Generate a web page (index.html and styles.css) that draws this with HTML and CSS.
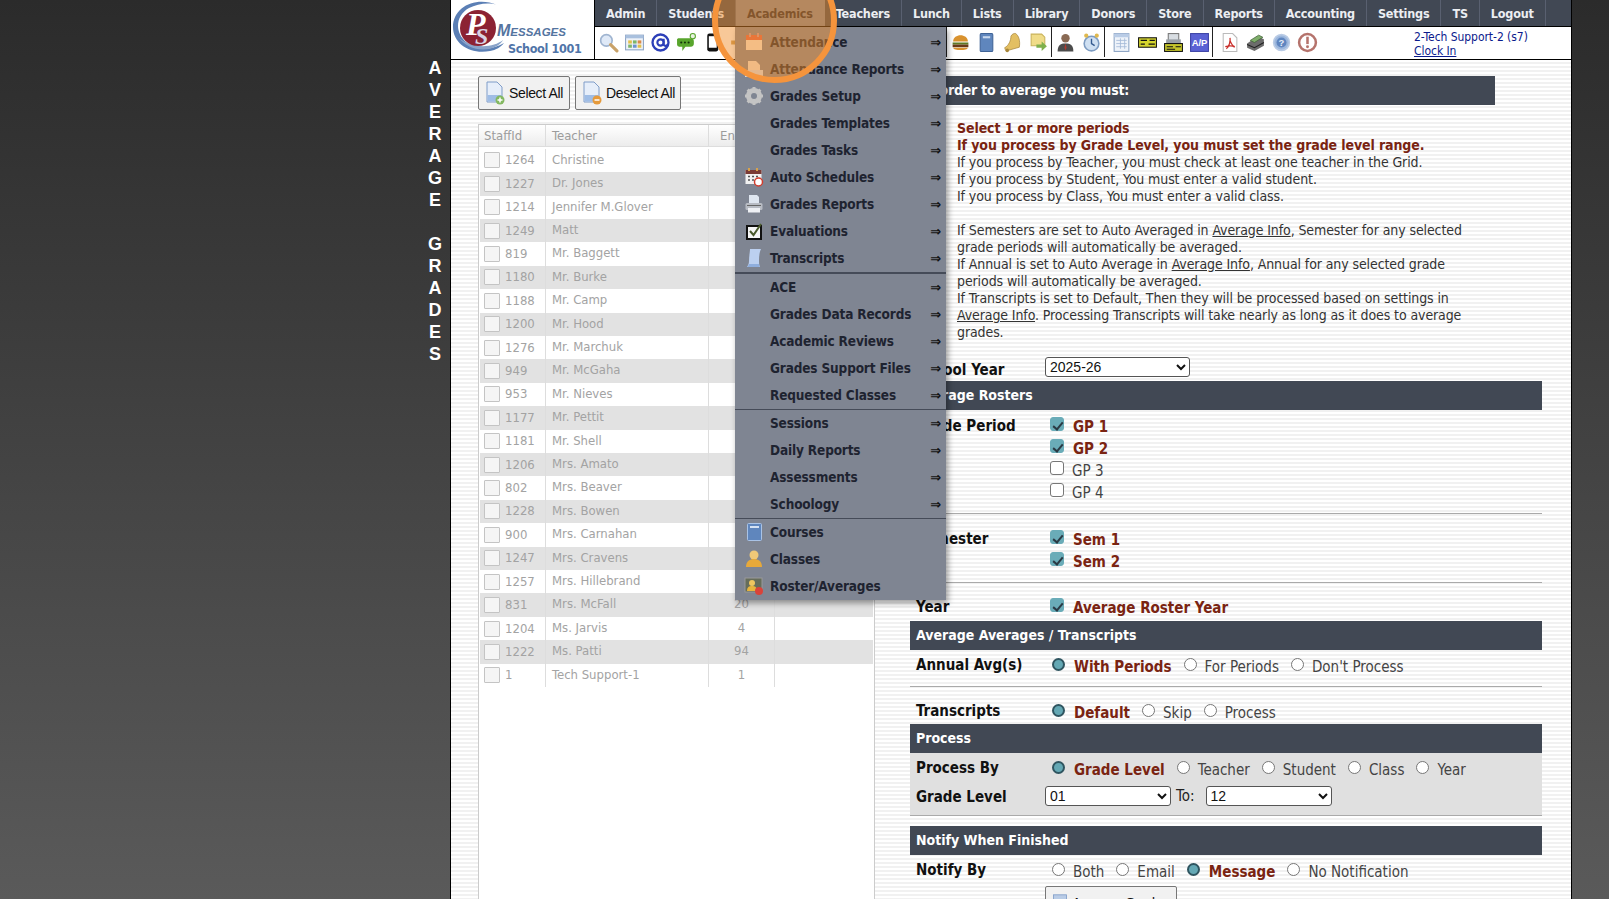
FILE: index.html
```html
<!DOCTYPE html>
<html lang="en">
<head>
<meta charset="utf-8">
<title>Average Grades</title>
<link rel="stylesheet" href="styles.css">
</head>
<body>
<aside class="side">
  <div class="vtext"><span>A</span><span>V</span><span>E</span><span>R</span><span>A</span><span>G</span><span>E</span><span>&nbsp;</span><span>G</span><span>R</span><span>A</span><span>D</span><span>E</span><span>S</span></div>
</aside>
<main class="page">
  <header class="top">
    <div class="logo">
      <svg width="143" height="59" viewBox="0 0 143 59">
        <path d="M46 5C26-4 2 6 2 27c0 17 18 28 37 24 6-1 11-4 14-8-11 7-28 8-38-1C3 32 5 15 18 8c8-4 20-6 28-3z" fill="#5b7fb5"/>
        <path d="M8 38c8 11 25 15 38 8 3-2 5-4 6-6-10 8-30 9-44-2z" fill="#8aa3c9"/>
        <circle cx="27" cy="28" r="18" fill="#8c2233"/>
        <text x="15" y="35" class="logo-p">P</text>
        <text x="24" y="44" class="logo-s">S</text>
        <text x="46" y="36" class="logo-m">M<tspan class="logo-ms" dy="0">ESSAGES</tspan></text>
        <text x="57" y="53" class="logo-sc">School 1001</text>
      </svg>
    </div>
    <div class="topright">
      <nav class="nav">
        <a>Admin</a><a>Students</a><a class="on">Academics</a><a>Teachers</a><a>Lunch</a><a>Lists</a><a>Library</a><a>Donors</a><a>Store</a><a>Reports</a><a>Accounting</a><a>Settings</a><a>TS</a><a>Logout</a>
      </nav>
      <div class="tools">
        <span class="t"><svg viewBox="0 0 20 20"><circle cx="8" cy="8" r="5.5" fill="#dfe9f7" stroke="#9fb4d0" stroke-width="1.6"/><path d="M12 12l6 6" stroke="#c9a268" stroke-width="3" stroke-linecap="round"/></svg></span>
        <span class="t"><svg viewBox="0 0 20 20"><rect x="1.5" y="3" width="17" height="14" fill="#eef2f8" stroke="#8ba3c4"/><rect x="1.5" y="3" width="17" height="3" fill="#a9c0de"/><rect x="4" y="8" width="3.5" height="3" fill="#e3c04a"/><rect x="8.5" y="8" width="3.5" height="3" fill="#7db56a"/><rect x="13" y="8" width="3.5" height="3" fill="#d98a4a"/><rect x="4" y="12" width="3.5" height="3" fill="#7db56a"/><rect x="8.5" y="12" width="3.5" height="3" fill="#6b93cf"/><rect x="13" y="12" width="3.5" height="3" fill="#e3c04a"/></svg></span>
        <span class="t"><svg viewBox="0 0 20 20"><circle cx="10" cy="10" r="7.6" fill="none" stroke="#2c3fb8" stroke-width="2.2"/><circle cx="10" cy="10" r="3" fill="none" stroke="#2c3fb8" stroke-width="2"/><path d="M13 6.5v5c0 2 3 2.500 4 0" fill="none" stroke="#2c3fb8" stroke-width="2"/></svg></span>
        <span class="t"><svg viewBox="0 0 20 20"><path d="M2 6h12a3 3 0 013 3v2a3 3 0 01-3 3H9l-3 4v-4H3a2 2 0 01-2-2V7z" fill="#58a52c"/><circle cx="5" cy="10" r="1" fill="#14320a"/><circle cx="8.500" cy="10" r="1" fill="#14320a"/><circle cx="12" cy="10" r="1" fill="#14320a"/><circle cx="16" cy="4" r="2.500" fill="#e8f2e0" stroke="#58a52c"/></svg></span>
        <span class="t"><svg viewBox="0 0 20 20"><rect x="5" y="1.500" width="10.500" height="17" rx="2" fill="#111"/><rect x="6.500" y="4" width="7.500" height="11" fill="#fff"/></svg></span>
        <span class="t"><svg viewBox="0 0 20 20"><path d="M3 8h4l6-4v12l-6-4H3z" fill="#c9a15c"/></svg></span>
        <span class="tgap"></span>
        <span class="t"><svg viewBox="0 0 20 20"><path d="M3 9c0-8 14-8 14 0z" fill="#d9922e"/><rect x="2.500" y="10" width="15" height="2" fill="#5f7a24"/><rect x="2.500" y="12" width="15" height="2.500" fill="#6b3a1a"/><path d="M3 15h14c0 3-14 3-14 0z" fill="#d9922e"/></svg></span>
        <span class="t"><svg viewBox="0 0 20 20"><rect x="4" y="1.500" width="12" height="17" rx="1" fill="#5f86bd" stroke="#3f6396"/><rect x="6.500" y="4" width="7" height="2" fill="#c9d9ee"/></svg></span>
        <span class="t"><svg viewBox="0 0 20 20"><path d="M13 1.500c3 2 4.500 7 3.500 13L4 18c-1-1-1-2-1.500-3 4-2 6-7 6-11 1-2 3-3 4.500-2.500z" fill="#e3bf62" stroke="#a8863a" stroke-width=".7"/><circle cx="5" cy="17.500" r="1.700" fill="#a8863a"/></svg></span>
        <span class="t sep"><svg viewBox="0 0 20 20"><path d="M3 2h10l3 3v8H3z" fill="#f0dc88" stroke="#c9b35c"/><path d="M8 12h5V9l5 4.500-5 4.500v-3H8z" fill="#7fb04c"/></svg></span>
        <span class="t"><svg viewBox="0 0 20 20"><circle cx="10" cy="6" r="4" fill="#8a6a54"/><path d="M2.500 18.500c0-6 3-7.500 7.500-7.500s7.500 1.500 7.500 7.500z" fill="#4c4c4c"/><path d="M10 11l-1 4 1 2.500 1-2.500z" fill="#b23a2c"/></svg></span>
        <span class="t sep sepm"><svg viewBox="0 0 20 20"><circle cx="10" cy="11" r="7" fill="#cfe0f2" stroke="#7d9cc2" stroke-width="1.500"/><path d="M10 6.500V11l3 2" stroke="#335a8f" stroke-width="1.300" fill="none"/><circle cx="5" cy="3.500" r="2" fill="#e0b94f"/><circle cx="15" cy="3.500" r="2" fill="#e0b94f"/></svg></span>
        <span class="t"><svg viewBox="0 0 20 20"><rect x="3" y="1.500" width="14" height="17" fill="#eef3fa" stroke="#8ba3c4"/><rect x="3" y="1.500" width="14" height="3.500" fill="#b9cce6"/><path d="M5 8h10M5 11h10M5 14h10M9 6v10M13 6v10" stroke="#a5bad8" stroke-width=".8"/></svg></span>
        <span class="t"><svg viewBox="0 0 20 20"><rect x="1.500" y="5.500" width="17" height="9" fill="#d5d52e" stroke="#111"/><path d="M3.500 8h6M3.500 11.500h4M12 8h5M11 11.500h6" stroke="#111" stroke-width="1.200"/></svg></span>
        <span class="t"><svg viewBox="0 0 20 20"><rect x="5" y="1.500" width="10" height="7" fill="#d8dde2" stroke="#777"/><rect x="3" y="7" width="14" height="4" fill="#9aa0a6"/><rect x="1.500" y="11" width="17" height="7.500" fill="#c5c52a" stroke="#111"/><path d="M3.500 14h6M12 14h5M3.500 16.500h8" stroke="#111"/></svg></span>
        <span class="t sep sepm"><svg viewBox="0 0 20 20"><rect x="1.500" y="1.500" width="17" height="17" fill="#5a62d4" stroke="#3c43a5"/><text x="10" y="13.500" class="ap">A/P</text></svg></span>
        <span class="t"><svg viewBox="0 0 20 20"><path d="M4 1.500h9l4 4v13H4z" fill="#fff" stroke="#bbb"/><path d="M7 16c3-2 4-8 3.500-10.500M6 14c4-1 7-1 9 .5M10.500 8c1 3 3 5.500 4.500 6" fill="none" stroke="#c9302c" stroke-width="1.200"/></svg></span>
        <span class="t"><svg viewBox="0 0 20 20"><path d="M2 11l10-7 6 3v6l-9 5-7-3z" fill="#6c6c6c"/><path d="M5 8l8-5 4 2-8 5z" fill="#7fae6a" stroke="#3e5f34" stroke-width=".7"/><path d="M2 12l7 3 9-5" stroke="#222" fill="none"/></svg></span>
        <span class="t"><svg viewBox="0 0 20 20"><circle cx="10" cy="10" r="7.500" fill="#9cb7dd" stroke="#b9cbe5" stroke-width="1.500"/><circle cx="10" cy="10" r="4.800" fill="#5f86c0"/><text x="10" y="13" class="help">?</text></svg></span>
        <span class="t"><svg viewBox="0 0 20 20"><circle cx="10" cy="10" r="8" fill="#fff" stroke="#b5736c" stroke-width="2.400"/><rect x="8.800" y="4.500" width="2.400" height="7" fill="#b5736c"/><circle cx="10" cy="14" r="1.400" fill="#b5736c"/></svg></span>
        <div class="user"><div>2-Tech Support-2 (s7)</div><a>Clock In</a></div>
      </div>
    </div>
  </header>

  <div class="content">
    <section class="left">
      <div class="btns">
        <button class="btn"><svg viewBox="0 0 22 24"><path d="M3 1h10l5 5v15H3z" fill="#e6eefa" stroke="#7f9cc8"/><rect x="3.500" y="14" width="14" height="6.500" fill="#9fbde6"/><circle cx="16" cy="19" r="4.500" fill="#83b861"/><path d="M13.500 19h5M16 16.500v5" stroke="#fff" stroke-width="1.500"/></svg>Select All</button>
        <button class="btn"><svg viewBox="0 0 22 24"><path d="M3 1h10l5 5v15H3z" fill="#e6eefa" stroke="#7f9cc8"/><rect x="3.500" y="14" width="14" height="6.500" fill="#9fbde6"/><circle cx="16" cy="19" r="4.500" fill="#e59a3c"/><path d="M13.500 19h5" stroke="#fff" stroke-width="1.500"/></svg>Deselect All</button>
      </div>
      <div class="grid">
        <div class="ghead"><span class="c1">StaffId</span><span class="c2">Teacher</span><span class="c3">Enrolled</span><span class="c4"></span></div>
        <div class="gbody">
          <div class="r"><span class="c1"><i></i>1264</span><span class="c2">Christine</span><span class="c3"></span><span class="c4"></span></div>
          <div class="r"><span class="c1"><i></i>1227</span><span class="c2">Dr. Jones</span><span class="c3"></span><span class="c4"></span></div>
          <div class="r"><span class="c1"><i></i>1214</span><span class="c2">Jennifer M.Glover</span><span class="c3"></span><span class="c4"></span></div>
          <div class="r"><span class="c1"><i></i>1249</span><span class="c2">Matt</span><span class="c3"></span><span class="c4"></span></div>
          <div class="r"><span class="c1"><i></i>819</span><span class="c2">Mr. Baggett</span><span class="c3"></span><span class="c4"></span></div>
          <div class="r"><span class="c1"><i></i>1180</span><span class="c2">Mr. Burke</span><span class="c3"></span><span class="c4"></span></div>
          <div class="r"><span class="c1"><i></i>1188</span><span class="c2">Mr. Camp</span><span class="c3"></span><span class="c4"></span></div>
          <div class="r"><span class="c1"><i></i>1200</span><span class="c2">Mr. Hood</span><span class="c3"></span><span class="c4"></span></div>
          <div class="r"><span class="c1"><i></i>1276</span><span class="c2">Mr. Marchuk</span><span class="c3"></span><span class="c4"></span></div>
          <div class="r"><span class="c1"><i></i>949</span><span class="c2">Mr. McGaha</span><span class="c3"></span><span class="c4"></span></div>
          <div class="r"><span class="c1"><i></i>953</span><span class="c2">Mr. Nieves</span><span class="c3"></span><span class="c4"></span></div>
          <div class="r"><span class="c1"><i></i>1177</span><span class="c2">Mr. Pettit</span><span class="c3"></span><span class="c4"></span></div>
          <div class="r"><span class="c1"><i></i>1181</span><span class="c2">Mr. Shell</span><span class="c3"></span><span class="c4"></span></div>
          <div class="r"><span class="c1"><i></i>1206</span><span class="c2">Mrs. Amato</span><span class="c3"></span><span class="c4"></span></div>
          <div class="r"><span class="c1"><i></i>802</span><span class="c2">Mrs. Beaver</span><span class="c3"></span><span class="c4"></span></div>
          <div class="r"><span class="c1"><i></i>1228</span><span class="c2">Mrs. Bowen</span><span class="c3"></span><span class="c4"></span></div>
          <div class="r"><span class="c1"><i></i>900</span><span class="c2">Mrs. Carnahan</span><span class="c3"></span><span class="c4"></span></div>
          <div class="r"><span class="c1"><i></i>1247</span><span class="c2">Mrs. Cravens</span><span class="c3"></span><span class="c4"></span></div>
          <div class="r"><span class="c1"><i></i>1257</span><span class="c2">Mrs. Hillebrand</span><span class="c3"></span><span class="c4"></span></div>
          <div class="r"><span class="c1"><i></i>831</span><span class="c2">Mrs. McFall</span><span class="c3">20</span><span class="c4"></span></div>
          <div class="r"><span class="c1"><i></i>1204</span><span class="c2">Ms. Jarvis</span><span class="c3">4</span><span class="c4"></span></div>
          <div class="r"><span class="c1"><i></i>1222</span><span class="c2">Ms. Patti</span><span class="c3">94</span><span class="c4"></span></div>
          <div class="r"><span class="c1"><i></i>1</span><span class="c2">Tech Support-1</span><span class="c3">1</span><span class="c4"></span></div>
        </div>
      </div>
    </section>

    <section class="right">
      <div class="bar bar-top">In order to average you must:</div>
      <div class="notes">
        <b>Select 1 or more periods</b><br>
        <b>If you process by Grade Level, you must set the grade level range.</b><br>
        If you process by Teacher, you must check at least one teacher in the Grid.<br>
        If you process by Student, You must enter a valid student.<br>
        If you process by Class, You must enter a valid class.<br>
        <br>
        If Semesters are set to Auto Averaged in <u>Average Info</u>, Semester for any selected<br>
        grade periods will automatically be averaged.<br>
        If Annual is set to Auto Average in <u>Average Info</u>, Annual for any selected grade<br>
        periods will automatically be averaged.<br>
        If Transcripts is set to Default, Then they will be processed based on settings in<br>
        <u>Average Info</u>. Processing Transcripts will take nearly as long as it does to average<br>
        grades.
      </div>
      <div class="line line-school"><label>School Year</label><select class="sel sel-year"><option>2025-26</option></select></div>
      <div class="bar">Average Rosters</div>
      <div class="group g-period">
        <div class="line h22"><label>Grade Period</label><span class="o"><input type="checkbox" checked><b>GP 1</b></span></div>
        <div class="line h22"><label></label><span class="o"><input type="checkbox" checked><b>GP 2</b></span></div>
        <div class="line h22"><label></label><span class="o"><input type="checkbox"><em>GP 3</em></span></div>
        <div class="line h22"><label></label><span class="o"><input type="checkbox"><em>GP 4</em></span></div>
      </div>
      <div class="group g-sem">
        <div class="line h22"><label>Semester</label><span class="o"><input type="checkbox" checked><b>Sem 1</b></span></div>
        <div class="line h22"><label></label><span class="o"><input type="checkbox" checked><b>Sem 2</b></span></div>
      </div>
      <div class="g-year">
        <div class="line h22"><label>Year</label><span class="o"><input type="checkbox" checked><b>Average Roster Year</b></span></div>
      </div>
      <div class="bar">Average Averages / Transcripts</div>
      <div class="group g-annual">
        <div class="line h30"><label>Annual Avg(s)</label>
          <span class="o"><input type="radio" name="a" checked><b>With Periods</b></span>
          <span class="o"><input type="radio" name="a"><em>For Periods</em></span>
          <span class="o"><input type="radio" name="a"><em>Don't Process</em></span></div>
      </div>
      <div class="g-trans">
        <div class="line h22"><label>Transcripts</label>
          <span class="o"><input type="radio" name="t" checked><b>Default</b></span>
          <span class="o"><input type="radio" name="t"><em>Skip</em></span>
          <span class="o"><input type="radio" name="t"><em>Process</em></span></div>
      </div>
      <div class="bar">Process</div>
      <div class="gray">
        <div class="line h28 row-proc"><label>Process By</label>
          <span class="o"><input type="radio" name="p" checked><b>Grade Level</b></span>
          <span class="o"><input type="radio" name="p"><em>Teacher</em></span>
          <span class="o"><input type="radio" name="p"><em>Student</em></span>
          <span class="o"><input type="radio" name="p"><em>Class</em></span>
          <span class="o"><input type="radio" name="p"><em>Year</em></span></div>
        <div class="line h28 row-grade"><label>Grade Level</label><select class="sel sel-gr"><option>01</option></select><span class="to">To:</span><select class="sel sel-gr"><option>12</option></select></div>
      </div>
      <div class="bar bar-notify">Notify When Finished</div>
      <div class="line h28 row-notify"><label>Notify By</label>
        <span class="o"><input type="radio" name="n"><em>Both</em></span>
        <span class="o"><input type="radio" name="n"><em>Email</em></span>
        <span class="o"><input type="radio" name="n" checked><b>Message</b></span>
        <span class="o"><input type="radio" name="n"><em>No Notification</em></span></div>
      <button class="btn btn-go"><svg viewBox="0 0 22 24"><rect x="3" y="2" width="16" height="20" fill="#b9cce6" stroke="#7f9cc8"/></svg>Average Grades</button>
    </section>
  </div>

  <div class="menu">
    <div class="sect">
      <a><svg class="mi" viewBox="0 0 20 20"><rect x="2" y="3" width="16" height="15" fill="#f7ead9"/><rect x="2" y="3" width="16" height="5" fill="#e2634a"/><rect x="5" y="1" width="2" height="4" fill="#c99"/><rect x="13" y="1" width="2" height="4" fill="#c99"/></svg>Attendance<s>⇒</s></a>
      <a><svg class="mi" viewBox="0 0 20 20"><path d="M4 2h8l4 4v10H4z" fill="#f2e4d6"/><rect x="1" y="11" width="18" height="7" fill="#d8dfe8"/></svg>Attendance Reports<s>⇒</s></a>
      <a><svg class="mi" viewBox="0 0 20 20"><circle cx="10" cy="10" r="6" fill="none" stroke="#c4c4c4" stroke-width="4"/><path d="M10 1v18M1 10h18M3.600 3.600l12.800 12.800M16.400 3.600L3.600 16.400" stroke="#c4c4c4" stroke-width="3"/><circle cx="10" cy="10" r="3" fill="#7f8592"/></svg>Grades Setup<s>⇒</s></a>
      <a><span class="mi"></span>Grades Templates<s>⇒</s></a>
      <a><span class="mi"></span>Grades Tasks<s>⇒</s></a>
      <a><svg class="mi" viewBox="0 0 20 20"><rect x="1.500" y="3" width="16" height="14" fill="#f1f1f1"/><rect x="1.500" y="3" width="16" height="4" fill="#7a3b35"/><rect x="4" y="1" width="2" height="3" fill="#d9a24a"/><rect x="12" y="1" width="2" height="3" fill="#d9a24a"/><path d="M4 9.500h2M8 9.500h2M12 9.500h2M4 13h2M8 13h2" stroke="#555" stroke-width="1.500"/><circle cx="14.500" cy="15" r="4" fill="#fff" stroke="#d23c2c" stroke-width="1.500"/></svg>Auto Schedules<s>⇒</s></a>
      <a><svg class="mi" viewBox="0 0 20 20"><path d="M5 1h8l2 2v6H5z" fill="#dfe6f0"/><rect x="1.500" y="9" width="17" height="7" rx="1.500" fill="#b8bcc4"/><rect x="4" y="14" width="12" height="4.500" fill="#eef0f4"/><rect x="3" y="11" width="14" height="1" fill="#666"/></svg>Grades Reports<s>⇒</s></a>
      <a><svg class="mi" viewBox="0 0 20 20"><rect x="3" y="5" width="14" height="13" fill="#f6f6f6" stroke="#111" stroke-width="2"/><path d="M6 10l3.500 4L17 3" fill="none" stroke="#4a5a2c" stroke-width="2"/></svg>Evaluations<s>⇒</s></a>
      <a><svg class="mi" viewBox="0 0 20 20"><path d="M6 1h11c-1 2-2 6-2 11 0 3 0 5 1 7H3c1-2 2-3 2-6 0-5 1-9 1-12z" fill="#bcd0f0"/><path d="M3 19h13c-1-1-1-2-1-3H5c0 1-1 2-2 3z" fill="#8faedd"/></svg>Transcripts<s>⇒</s></a>
    </div>
    <div class="sect sect-thick">
      <a><span class="mi"></span>ACE<s>⇒</s></a>
      <a><span class="mi"></span>Grades Data Records<s>⇒</s></a>
      <a><span class="mi"></span>Academic Reviews<s>⇒</s></a>
      <a><span class="mi"></span>Grades Support Files<s>⇒</s></a>
      <a><span class="mi"></span>Requested Classes<s>⇒</s></a>
    </div>
    <div class="sect sect-thin">
      <a><span class="mi"></span>Sessions<s>⇒</s></a>
      <a><span class="mi"></span>Daily Reports<s>⇒</s></a>
      <a><span class="mi"></span>Assessments<s>⇒</s></a>
      <a><span class="mi"></span>Schoology<s>⇒</s></a>
    </div>
    <div class="sect sect-thin">
      <a><svg class="mi" viewBox="0 0 20 20"><rect x="3.500" y="1.500" width="14" height="17" rx="1" fill="#5f86bd" stroke="#a9c3e6"/><rect x="6" y="4" width="9" height="2" fill="#d5e2f3"/></svg>Courses</a>
      <a><svg class="mi" viewBox="0 0 20 20"><circle cx="10" cy="6" r="4.500" fill="#f0c878"/><path d="M2 18c0-6 4-8 8-8s8 2 8 8z" fill="#e7a93a"/></svg>Classes</a>
      <a><svg class="mi" viewBox="0 0 20 20"><rect x="1" y="2" width="17" height="14" fill="#666d5a" stroke="#999"/><circle cx="8" cy="7" r="3" fill="#eec65f"/><path d="M3 15c0-4 2-5 5-5s5 1 5 5z" fill="#e7b43e"/><circle cx="15" cy="15" r="4" fill="#d9433a"/></svg>Roster/Averages</a>
    </div>
  </div>
  <div class="ring"></div>
</main>
<aside class="side side-r"></aside>
</body>
</html>
```

FILE: styles.css
```css
* { box-sizing: border-box; }
html, body { margin: 0; height: 899px; overflow: hidden; }
body {
  display: flex;
  font-family: "DejaVu Sans Condensed", "DejaVu Sans", sans-serif;
  font-stretch: condensed;
  font-size: 14px;
  background: #333;
}
.side {
  width: 450px;
  flex: none;
  background: linear-gradient(180deg, #2b2b2b 0%, #5a5a5a 100%);
  padding-top: 57px;
}
.side-r { width: 37px; }
.vtext {
  display: flex;
  flex-direction: column;
  align-items: flex-end;
  padding-right: 7px;
}
.vtext span {
  width: 16px;
  height: 22px;
  text-align: center;
  font: bold 18px/22px "Liberation Sans", sans-serif;
  color: #fff;
}
.page {
  position: relative;
  width: 1122px;
  flex: none;
  height: 899px;
  overflow: hidden;
  border-left: 1px solid #000;
  border-right: 1px solid #000;
  background: repeating-linear-gradient(180deg, #fff 0 2px, #f1f1f1 2px 4px);
}

/* header */
.top { display: flex; height: 60px; background: #fff; border-bottom: 1px solid #000; }
.logo { width: 144px; flex: none; border-right: 1px solid #000; height: 59px; }
.logo svg { display: block; }
.logo-p { font: italic bold 32px "Liberation Serif", serif; fill: #fff; }
.logo-s { font: italic bold 24px "Liberation Serif", serif; fill: #d9d4e4; }
.logo-m { font: italic bold 16px "Liberation Sans", sans-serif; fill: #54749f; }
.logo-ms { font-size: 11.500px; }
.logo-sc { font: bold 12.500px "DejaVu Sans Condensed", "DejaVu Sans", sans-serif; letter-spacing: -.35px; fill: #4f74a8; }
.ap { font: bold 9px "Liberation Sans", sans-serif; fill: #fff; text-anchor: middle; }
.help { font: bold 9px "Liberation Sans", sans-serif; fill: #e8eef8; text-anchor: middle; }
.topright { flex: 1; display: flex; flex-direction: column; min-width: 0; }
.nav { display: flex; height: 27px; background: #414854; border-bottom: 1px solid #000; }
.nav a {
  padding: 0 11px;
  line-height: 27px;
  color: #eceef2;
  font-weight: bold;
  font-size: 12.500px;
  letter-spacing: -.2px;
  border-right: 1px solid #596070;
}
.nav a.on { background: #7f8592; color: #1f2430; border-right-color: #7f8592; }
.tools { flex: 1; display: flex; align-items: center; height: 32px; }
.t { width: 26px; height: 30px; flex: none; display: flex; align-items: center; justify-content: center; margin-top: -2px; }
.t svg { width: 21px; height: 21px; display: block; }
.sep { box-sizing: content-box; border-right: 1px solid #222; }
.sepm { margin-right: 3px; }
.tgap { width: 196px; flex: none; border-right: 1px solid #222; height: 30px; margin-top: -2px; }
.user {
  margin-left: auto;
  width: 157px;
  flex: none;
  padding-top: 2px;
  font-size: 12px;
  letter-spacing: -.05px;
  line-height: 14px;
  color: #0b1a8c;
}
.user a { text-decoration: underline; }

/* content */
.content { display: flex; height: 839px; }
.left { width: 459px; flex: none; padding: 16px 0 0 27px; }
.btns { display: flex; gap: 5px; height: 34px; }
.btn {
  display: inline-flex;
  align-items: center;
  height: 34px;
  padding: 0 5px;
  gap: 3px;
  white-space: nowrap;
  font: 14px "Liberation Sans", sans-serif;
  letter-spacing: -.35px;
  color: #111;
  background: #f1f1f1;
  border: 1px solid #777;
  border-radius: 2px;
}
.btn svg { width: 22px; height: 24px; flex: none; }
.btns .btn:first-child { width: 92px; }
.btns .btn:last-child { width: 106px; }
.grid {
  width: 397px;
  height: 800px;
  margin-top: 14px;
  background: #fff;
  border: 1px solid #ccc;
  color: #a3a3a3;
  font-size: 13px;
}
.ghead {
  display: flex;
  height: 22px;
  line-height: 21px;
  background: linear-gradient(180deg, #fff, #ececec);
  border-bottom: 1px solid #ddd;
  color: #9c9c9c;
}
.c1, .c2, .c3, .c4 { display: block; white-space: nowrap; overflow: hidden; height: 100%; }
.c1 { width: 67px; padding-left: 5px; border-right: 1px solid #ddd; }
.c2 { width: 163px; padding-left: 6px; border-right: 1px solid #ddd; }
.c3 { width: 66px; border-right: 1px solid #ddd; text-align: center; }
.c4 { flex: 1; border-right: 0; }
.ghead .c3 { text-align: left; padding-left: 11px; }
.gbody { padding: 1.700px 1px 0; }
.r { display: flex; height: 23.420px; line-height: 22px; }
.r .c1 { width: 66px; padding-left: 4px; display: flex; align-items: center; gap: 5px; }
.r:nth-child(even) { background: #e2e2e2; }
.r i {
  display: block;
  width: 16px;
  height: 16px;
  border: 1px solid #c4c4c4;
  background: #f5f5f5;
  border-radius: 1px;
  flex: none;
}

/* right */
.right { width: 632px; flex: none; padding-top: 16px; color: #222; }
.bar {
  height: 29px;
  line-height: 29px;
  padding-left: 6px;
  background: #414854;
  color: #fff;
  font-weight: bold;
  font-size: 14px;
}
.bar-top { width: 585px; padding-left: 12px; letter-spacing: -.2px; }
.notes {
  margin-top: 15px;
  padding-left: 47px;
  height: 221px;
  line-height: 17px;
  font-size: 14px;
  letter-spacing: -.1px;
  color: #333;
  white-space: nowrap;
}
.notes b { color: #7a2412; }
.line { display: flex; align-items: center; }
.line label {
  width: 135px;
  flex: none;
  padding-left: 6px;
  font-weight: bold;
  font-size: 15px;
  color: #111;
  position: relative;
  top: -1px;
}
.line-school { height: 40px; align-items: flex-end; padding-bottom: 4px; }
.line-school label { top: 2px; }
.g-period label, .g-sem label, .g-year label { top: 0; }
.h22 { height: 22px; }
.h28 { height: 28px; }
.h30 { height: 30px; }
.group { border-bottom: 1px solid #aaa; }
.g-period { padding-top: 5px; height: 104px; }
.g-sem { padding-top: 14px; height: 69px; }
.g-year { padding-top: 13px; height: 38px; }
.g-annual { height: 37px; padding-top: 1px; }
.g-trans { height: 37px; padding-top: 14px; }
.gray { height: 63px; background: #e0e0e0; border-bottom: 1px solid #aaa; padding-top: 1px; }
.row-proc { position: relative; top: 1px; }
.row-grade label { top: 1px; }
.bar-notify { margin-top: 10px; }
.row-notify { margin-top: 2px; }
.o { display: inline-flex; align-items: center; margin-right: 5px; font-size: 15px; white-space: nowrap; }
.o b { color: #7a2412; font-weight: bold; margin-left: 9px; position: relative; top: 1px; }
.o em { color: #444; font-style: normal; font-size: 15px; margin-left: 8px; position: relative; top: 1px; }
input[type=checkbox] {
  appearance: none;
  margin: 0 0 0 5px;
  width: 14px;
  height: 14px;
  border: 1px solid #777;
  border-radius: 3px;
  background: #fff;
  position: relative;
  top: -2px;
}
input[type=checkbox]:checked { background: #6aacb8; border-color: #6aacb8; }
input[type=checkbox]:checked::after {
  content: "";
  position: absolute;
  left: 3.500px;
  top: 1.500px;
  width: 4px;
  height: 8px;
  border: solid #2b3a44;
  border-width: 0 2px 2px 0;
  transform: rotate(40deg);
}
input[type=radio] {
  appearance: none;
  margin: 0 0 0 7px;
  width: 13px;
  height: 13px;
  border: 1px solid #777;
  border-radius: 50%;
  background: #fff;
  position: relative;
  top: -2px;
}
input[type=radio]:checked { background: #64a8b4; border: 2px solid #2f5560; }
.sel {
  height: 20px;
  border: 1px solid #555;
  border-radius: 3px;
  background: #fff;
  font: 14px "Liberation Sans", sans-serif;
  color: #111;
}
.sel-year { width: 145px; }
.sel-gr { width: 126px; }
.to { margin: 0 11px 0 5px; font-size: 15px; color: #222; }
.btn-go { display: flex; width: 132px; margin: 1px 0 0 135px; }
.btn-go svg { width: 18px; }

/* overlays */
.menu {
  position: absolute;
  left: 284px;
  top: 27px;
  width: 211px;
  height: 572.500px;
  padding-top: 1.500px;
  background: #7f8592;
  box-shadow: 2px 3px 6px rgba(0, 0, 0, .4);
  z-index: 5;
}
.sect-thick { border-top: 2px solid #454b58; }
.sect-thin { border-top: 1px solid #454b58; }
.menu a {
  display: flex;
  align-items: center;
  height: 27px;
  font-weight: bold;
  font-size: 13.500px;
  letter-spacing: -.15px;
  color: #1e2330;
}
.mi { width: 20px; height: 20px; margin: 0 6px 0 9px; flex: none; display: block; }
.menu s {
  margin-left: auto;
  margin-right: 5px;
  text-decoration: none;
  font: bold 13px "DejaVu Sans", sans-serif;
  color: #111;
}
.ring {
  position: absolute;
  left: 261px;
  top: -42px;
  width: 125px;
  height: 125px;
  border: 6px solid #f5943c;
  border-radius: 50%;
  background: rgba(240, 140, 40, .48);
  z-index: 6;
}
```
